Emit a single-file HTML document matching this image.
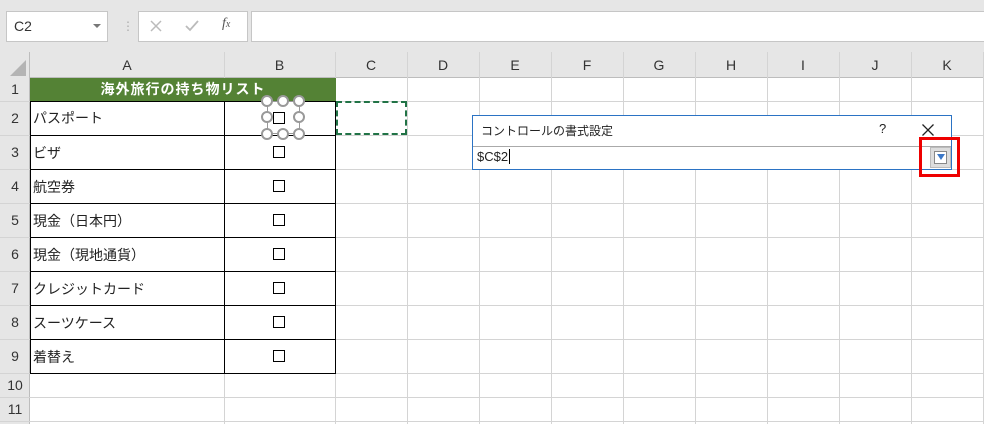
<!DOCTYPE html>
<html><head><meta charset="utf-8"><style>
*{box-sizing:border-box;margin:0;padding:0}
body{width:984px;height:424px;overflow:hidden;background:#fff;font-family:"Liberation Sans","Noto Sans CJK JP",sans-serif;position:relative;font-size:14px;color:#222}
.a{position:absolute}
.vl{position:absolute;top:52px;width:1px;height:372px;background:#d4d4d4}
.hl{position:absolute;left:0;height:1px;width:984px;background:#d4d4d4}
.ch{position:absolute;top:52px;height:26px;line-height:26px;text-align:center;font-size:14px;color:#333}
.rh{position:absolute;left:0;width:30px;text-align:center;font-size:14px;color:#333}
.cb{position:absolute;width:12px;height:12px;border:1.2px solid #000;left:273px}
.txt{position:absolute;left:33px;font-size:14px}
.hd{position:absolute;width:12px;height:12px;border:2px solid #999;border-radius:50%;background:#fff}
</style></head><body>
<div class="a" style="left:0;top:0;width:984px;height:52px;background:#e6e6e6"></div>
<div class="a" style="left:6px;top:11px;width:102px;height:31px;background:#fff;border:1px solid #c6c6c6;font-size:14px;line-height:29px;padding-left:7px;color:#333">C2</div>
<div class="a" style="left:93px;top:24px;border-left:4px solid transparent;border-right:4px solid transparent;border-top:4px solid #777"></div>
<div class="a" style="left:122px;top:19px;color:#aaa;font-size:12px">⋮</div>
<div class="a" style="left:138px;top:11px;width:110px;height:31px;background:#fff;border:1px solid #c6c6c6"></div>
<svg class="a" style="left:150px;top:20px" width="12" height="12"><path d="M1 1L11 11M11 1L1 11" stroke="#bbb" stroke-width="1.5"/></svg>
<svg class="a" style="left:185px;top:20px" width="14" height="12"><path d="M1 6L5 10L13 1" stroke="#bbb" stroke-width="1.8" fill="none"/></svg>
<div class="a" style="left:222px;top:16px;color:#555;font-size:14px;font-style:italic;font-family:'Liberation Serif',serif">f<span style="font-size:10px">x</span></div>
<div class="a" style="left:251px;top:11px;width:740px;height:31px;background:#fff;border:1px solid #c6c6c6"></div>
<div class="a" style="left:0;top:52px;width:984px;height:26px;background:#e6e6e6;border-bottom:1px solid #bdbdbd"></div>
<div class="a" style="left:0;top:52px;width:30px;height:372px;background:#e6e6e6;border-right:1px solid #bdbdbd"></div>
<div class="a" style="left:10px;top:60px;border-left:16px solid transparent;border-bottom:16px solid #b4b4b4"></div>
<div class="vl" style="left:224px"></div><div class="vl" style="left:335px"></div><div class="vl" style="left:407px"></div><div class="vl" style="left:479px"></div><div class="vl" style="left:551px"></div><div class="vl" style="left:623px"></div><div class="vl" style="left:695px"></div><div class="vl" style="left:767px"></div><div class="vl" style="left:839px"></div><div class="vl" style="left:911px"></div><div class="vl" style="left:983px"></div>
<div class="ch" style="left:30px;width:194px">A</div><div class="ch" style="left:224px;width:111px">B</div><div class="ch" style="left:335px;width:72px">C</div><div class="ch" style="left:407px;width:72px">D</div><div class="ch" style="left:479px;width:72px">E</div><div class="ch" style="left:551px;width:72px">F</div><div class="ch" style="left:623px;width:72px">G</div><div class="ch" style="left:695px;width:72px">H</div><div class="ch" style="left:767px;width:72px">I</div><div class="ch" style="left:839px;width:72px">J</div><div class="ch" style="left:911px;width:72px">K</div>
<div class="hl" style="top:101px"></div><div class="hl" style="top:135px"></div><div class="hl" style="top:169px"></div><div class="hl" style="top:203px"></div><div class="hl" style="top:237px"></div><div class="hl" style="top:271px"></div><div class="hl" style="top:305px"></div><div class="hl" style="top:339px"></div><div class="hl" style="top:373px"></div><div class="hl" style="top:397px"></div><div class="hl" style="top:421px"></div>
<div class="rh" style="top:78px;line-height:23px">1</div>
<div class="rh" style="top:101px;line-height:34px">2</div><div class="rh" style="top:135px;line-height:34px">3</div><div class="rh" style="top:169px;line-height:34px">4</div><div class="rh" style="top:203px;line-height:34px">5</div><div class="rh" style="top:237px;line-height:34px">6</div><div class="rh" style="top:271px;line-height:34px">7</div><div class="rh" style="top:305px;line-height:34px">8</div><div class="rh" style="top:339px;line-height:34px">9</div><div class="rh" style="top:373px;line-height:24px">10</div><div class="rh" style="top:397px;line-height:24px">11</div>
<div class="a" style="left:30px;top:78px;width:306px;height:24px;background:#548235;color:#fff;font-weight:bold;text-align:center;line-height:23px;font-size:14px;letter-spacing:1px">海外旅行の持ち物リスト</div>
<div class="a" style="left:30px;top:101px;width:306px;height:273px;border:1px solid #000"></div>
<div class="a" style="left:224px;top:101px;width:1px;height:272px;background:#000"></div>
<div class="a" style="left:30px;top:135px;width:306px;height:1px;background:#000"></div><div class="a" style="left:30px;top:169px;width:306px;height:1px;background:#000"></div><div class="a" style="left:30px;top:203px;width:306px;height:1px;background:#000"></div><div class="a" style="left:30px;top:237px;width:306px;height:1px;background:#000"></div><div class="a" style="left:30px;top:271px;width:306px;height:1px;background:#000"></div><div class="a" style="left:30px;top:305px;width:306px;height:1px;background:#000"></div><div class="a" style="left:30px;top:339px;width:306px;height:1px;background:#000"></div>
<div class="txt" style="top:108px">パスポート</div><div class="txt" style="top:143px">ビザ</div><div class="txt" style="top:177px">航空券</div><div class="txt" style="top:211px">現金（日本円）</div><div class="txt" style="top:245px">現金（現地通貨）</div><div class="txt" style="top:279px">クレジットカード</div><div class="txt" style="top:313px">スーツケース</div><div class="txt" style="top:347px">着替え</div>
<div class="a" style="left:267px;top:101px;width:33px;height:33px;border:1px solid #999"></div>
<div class="cb" style="top:112px"></div><div class="cb" style="top:146px"></div><div class="cb" style="top:180px"></div><div class="cb" style="top:214px"></div><div class="cb" style="top:248px"></div><div class="cb" style="top:282px"></div><div class="cb" style="top:316px"></div><div class="cb" style="top:350px"></div>
<div class="hd" style="left:261px;top:95px"></div><div class="hd" style="left:277px;top:95px"></div><div class="hd" style="left:293px;top:95px"></div>
<div class="hd" style="left:261px;top:111px"></div><div class="hd" style="left:293px;top:111px"></div>
<div class="hd" style="left:261px;top:128px"></div><div class="hd" style="left:277px;top:128px"></div><div class="hd" style="left:293px;top:128px"></div>
<div class="a" style="left:336px;top:101px;width:71px;height:34px;border:2px dashed #217346"></div>
<div class="a" style="left:472px;top:115px;width:480px;height:55px;background:#fff;border:1px solid #2b73c4"></div>
<div class="a" style="left:481px;top:122px;font-size:12px">コントロールの書式設定</div>
<div class="a" style="left:879px;top:121px;font-size:13px">?</div>
<svg class="a" style="left:922px;top:124px" width="12" height="12"><path d="M0.5 0.5L11.5 11.5M11.5 0.5L0.5 11.5" stroke="#222" stroke-width="1.3"/></svg>
<div class="a" style="left:473px;top:146px;width:478px;height:23px;border-top:1px solid #aaa"></div>
<div class="a" style="left:477px;top:149px;font-size:13px">$C$2<span style="border-left:1px solid #000;margin-left:1px"></span></div>
<div class="a" style="left:930px;top:147px;width:21px;height:21px;background:#ddd;border:1px solid #bbb"></div>
<div class="a" style="left:934px;top:151px;width:13px;height:13px;background:#fff;border:1px solid #888"></div>
<div class="a" style="left:937px;top:154px;border-left:4px solid transparent;border-right:4px solid transparent;border-top:6px solid #3c78c8"></div>
<div class="a" style="left:919px;top:137px;width:41px;height:40px;border:3px solid #e00"></div>
</body></html>
